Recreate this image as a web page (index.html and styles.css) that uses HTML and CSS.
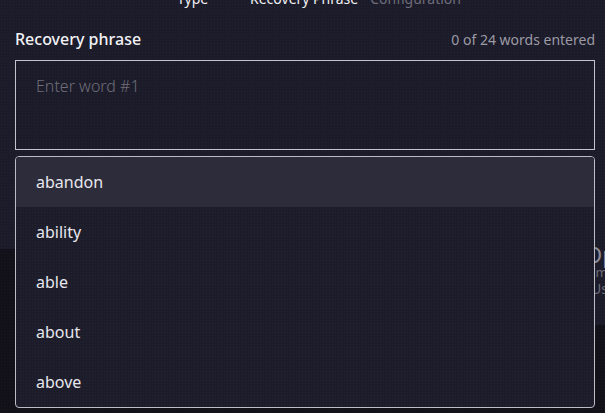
FILE: index.html
```html
<!DOCTYPE html>
<html lang="en">
<head>
<meta charset="utf-8">
<title>Recovery phrase</title>
<link rel="stylesheet" href="styles.css">
</head>
<body>
<div class="top">
  <div class="stepper">
    <span class="step done">Type</span>
    <span class="step active">Recovery Phrase</span>
    <span class="step">Configuration</span>
  </div>
  <div class="form">
    <div class="label-row">
      <span class="label">Recovery phrase</span>
      <span class="count">0 of 24 words entered</span>
    </div>
    <div class="field">
      <div class="input"><span class="placeholder">Enter word #1</span></div>
      <ul class="dropdown">
        <li class="item selected">abandon</li>
        <li class="item">ability</li>
        <li class="item">able</li>
        <li class="item">about</li>
        <li class="item">above</li>
      </ul>
    </div>
  </div>
</div>
<div class="lower">
  <div class="spacer"></div>
  <div class="card">
    <div class="card-title">Open</div>
    <div class="card-line">Import</div>
    <div class="card-line">Use</div>
  </div>
</div>
</body>
</html>
```
FILE: styles.css
```css
html, body {
  margin: 0;
  padding: 0;
}
body {
  width: 605px;
  height: 413px;
  overflow: hidden;
  background-color: #121119;
  background-image: radial-gradient(rgba(255,255,255,0.025) 0.6px, transparent 0.8px);
  background-size: 3px 3px;
  font-family: "Noto Sans", "Open Sans", sans-serif;
  color: #ececf1;
}
.top {
  display: flow-root;
  background-color: #1c1b29;
  background-image: radial-gradient(rgba(255,255,255,0.035) 0.6px, transparent 0.8px);
  background-size: 3px 3px;
  height: 249px;
}
.stepper {
  display: flex;
  height: 14px;
  margin-top: -8px;
  padding-left: 177px;
  font-size: 14px;
  line-height: 14px;
}
.stepper .step {
  color: #6e6d7a;
  white-space: nowrap;
}
.stepper .step.done {
  color: #f0f0f4;
  width: 73px;
}
.stepper .step.active {
  color: #f0f0f4;
  margin-right: 12px;
}
.form {
  padding: 0 10px 0 15px;
}
.label-row {
  display: flex;
  justify-content: space-between;
  align-items: baseline;
  margin-top: 23px;
  height: 31px;
}
.label {
  font-size: 16px;
  font-weight: 500;
  line-height: 20px;
  color: #f2f2f6;
}
.count {
  font-size: 14px;
  color: #9b9aa5;
}
.field {
  position: relative;
}
.input {
  box-sizing: border-box;
  height: 90px;
  border: 1px solid #c4c3cc;
  padding: 15px 20px 13px;
  font-size: 16px;
  line-height: 21px;
}
.placeholder {
  color: #6f6e79;
  font-weight: 300;
}
.dropdown {
  position: absolute;
  left: 0;
  right: 0;
  top: 96px;
  margin: 0;
  padding: 0;
  list-style: none;
  border: 1px solid #bdbcc5;
  border-radius: 4px;
  background-color: #1d1c2a;
  background-image: radial-gradient(rgba(255,255,255,0.04) 0.6px, transparent 0.8px);
  background-size: 3px 3px;
  overflow: hidden;
  z-index: 2;
}
.item {
  height: 50px;
  line-height: 50px;
  padding-left: 20px;
  font-size: 16px;
  color: #e8e8ee;
}
.item.selected {
  background: #2d2c3a;
}
.lower {
  display: flex;
}
.spacer {
  width: 585px;
  flex: none;
}
.card {
  flex: none;
  width: 80px;
  height: 76px;
  background-color: #1c1b29;
  background-image: radial-gradient(rgba(255,255,255,0.035) 0.6px, transparent 0.8px);
  background-size: 3px 3px;
}
.card-title {
  margin-top: -5px;
  font-size: 22px;
  line-height: 20px;
  color: #8d8c98;
}
.card-line {
  padding-left: 6px;
  font-size: 13px;
  line-height: 16px;
  color: #6c6b77;
}
.card-line + .card-line {
  font-size: 14px;
  line-height: 18px;
}
```
